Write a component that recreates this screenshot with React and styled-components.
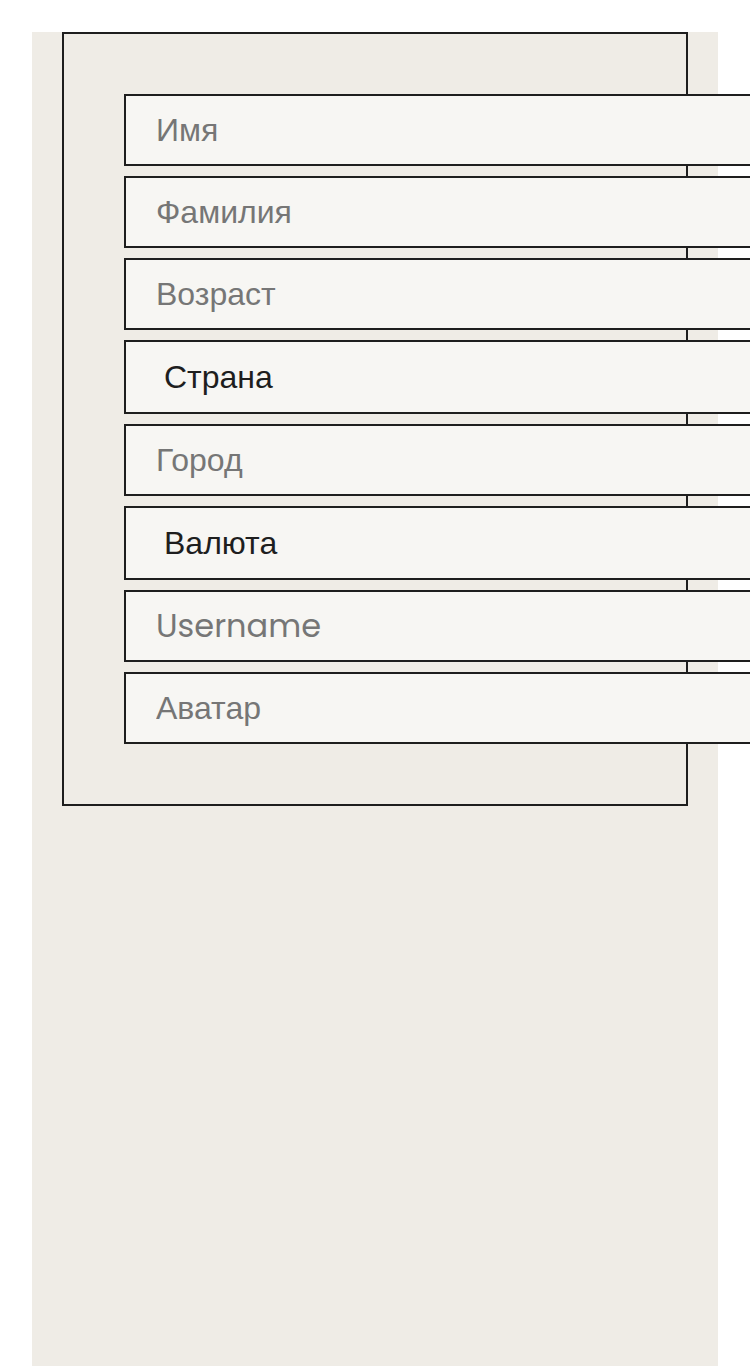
import React from "react";
import styled, { createGlobalStyle } from "styled-components";

const GlobalStyle = createGlobalStyle`
  html, body {
    margin: 0;
    padding: 0;
    background: #ffffff;
    overflow-x: hidden;
  }
  body {
    font-family: "Liberation Sans", Arial, sans-serif;
  }
`;

const Page = styled.div`
  padding: 32px 32px 0 32px;
`;

const Panel = styled.div`
  width: 686px;
  min-height: 1400px;
  box-sizing: border-box;
  padding: 0 30px;
  background: #efece6;
`;

const Form = styled.form`
  display: flex;
  flex-direction: column;
  gap: 10px;
  padding: 60px;
  border: 2px solid #1e1e1e;
  box-sizing: border-box;
  width: 626px;
`;

const Field = styled.input`
  box-sizing: border-box;
  width: 700px;
  flex: none;
  height: 72px;
  margin: 0;
  padding: 0 30px;
  border: 2px solid #1e1e1e;
  border-radius: 0;
  background: #f7f6f3;
  color: #1e1e1e;
  font-family: ${(p) => (p.$latin ? '"Poppins", "Inter", sans-serif' : '"Liberation Sans", Arial, sans-serif')};
  font-size: 32px;
  outline: none;

  &::placeholder {
    color: #767676;
    opacity: 1;
  }
`;

const Select = styled.select`
  box-sizing: border-box;
  width: 700px;
  flex: none;
  height: 74px;
  margin: 0;
  padding: 0 30px 0 38px;
  border: 2px solid #1e1e1e;
  border-radius: 0;
  background: #f7f6f3;
  color: #1e1e1e;
  font-family: "Liberation Sans", Arial, sans-serif;
  font-size: 32px;
  appearance: none;
  outline: none;
`;

export default function App() {
  return (
    <>
      <GlobalStyle />
      <Page>
        <Panel>
          <Form onSubmit={(e) => e.preventDefault()}>
            <Field type="text" placeholder="Имя" />
            <Field type="text" placeholder="Фамилия" />
            <Field type="number" placeholder="Возраст" />
            <Select defaultValue="country">
              <option value="country">Страна</option>
            </Select>
            <Field type="text" placeholder="Город" />
            <Select defaultValue="currency">
              <option value="currency">Валюта</option>
            </Select>
            <Field type="text" placeholder="Username" $latin />
            <Field type="text" placeholder="Аватар" />
          </Form>
        </Panel>
      </Page>
    </>
  );
}
